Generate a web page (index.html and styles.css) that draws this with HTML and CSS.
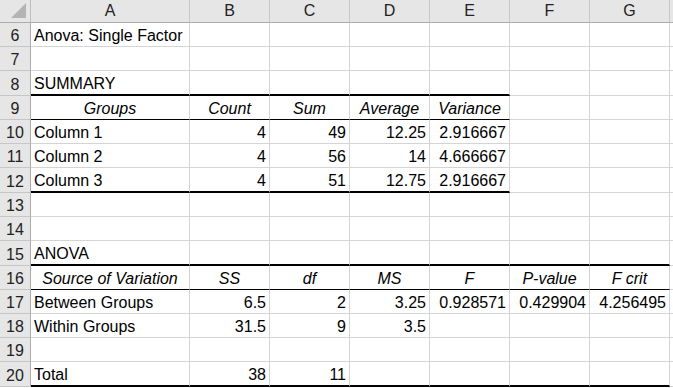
FILE: index.html
```html
<!DOCTYPE html>
<html>
<head>
    <title>Anova: Single Factor</title>
    <link rel="stylesheet" href="styles.css">
</head>
<body>
    <div class="sheet">
        <!-- column headers -->
        <div class="corner"><span class="tri"></span></div>
        <div class="hd">A</div><div class="hd">B</div><div class="hd">C</div><div class="hd">D</div>
        <div class="hd">E</div><div class="hd">F</div><div class="hd">G</div><div class="hd last"></div>

        <!-- 6 -->
        <div class="rh">6</div>
        <div class="c">Anova: Single Factor</div><div class="c"></div><div class="c"></div><div class="c"></div>
        <div class="c"></div><div class="c"></div><div class="c"></div><div class="c"></div>

        <!-- 7 -->
        <div class="rh">7</div>
        <div class="c"></div><div class="c"></div><div class="c"></div><div class="c"></div>
        <div class="c"></div><div class="c"></div><div class="c"></div><div class="c"></div>

        <!-- 8 -->
        <div class="rh">8</div>
        <div class="c thick">SUMMARY</div><div class="c thick"></div><div class="c thick"></div><div class="c thick"></div>
        <div class="c thick"></div><div class="c"></div><div class="c"></div><div class="c"></div>

        <!-- 9 -->
        <div class="rh">9</div>
        <div class="c th rule">Groups</div><div class="c th rule">Count</div><div class="c th rule">Sum</div><div class="c th rule">Average</div>
        <div class="c th rule">Variance</div><div class="c"></div><div class="c"></div><div class="c"></div>

        <!-- 10 -->
        <div class="rh">10</div>
        <div class="c">Column 1</div><div class="c num">4</div><div class="c num">49</div><div class="c num">12.25</div>
        <div class="c num">2.916667</div><div class="c"></div><div class="c"></div><div class="c"></div>

        <!-- 11 -->
        <div class="rh">11</div>
        <div class="c">Column 2</div><div class="c num">4</div><div class="c num">56</div><div class="c num">14</div>
        <div class="c num">4.666667</div><div class="c"></div><div class="c"></div><div class="c"></div>

        <!-- 12 -->
        <div class="rh">12</div>
        <div class="c thick">Column 3</div><div class="c num thick">4</div><div class="c num thick">51</div><div class="c num thick">12.75</div>
        <div class="c num thick">2.916667</div><div class="c"></div><div class="c"></div><div class="c"></div>

        <!-- 13 -->
        <div class="rh">13</div>
        <div class="c"></div><div class="c"></div><div class="c"></div><div class="c"></div>
        <div class="c"></div><div class="c"></div><div class="c"></div><div class="c"></div>

        <!-- 14 -->
        <div class="rh">14</div>
        <div class="c"></div><div class="c"></div><div class="c"></div><div class="c"></div>
        <div class="c"></div><div class="c"></div><div class="c"></div><div class="c"></div>

        <!-- 15 -->
        <div class="rh">15</div>
        <div class="c thick">ANOVA</div><div class="c thick"></div><div class="c thick"></div><div class="c thick"></div>
        <div class="c thick"></div><div class="c thick"></div><div class="c thick"></div><div class="c"></div>

        <!-- 16 -->
        <div class="rh">16</div>
        <div class="c th rule">Source of Variation</div><div class="c th rule">SS</div><div class="c th rule">df</div><div class="c th rule">MS</div>
        <div class="c th rule">F</div><div class="c th rule">P-value</div><div class="c th rule">F crit</div><div class="c"></div>

        <!-- 17 -->
        <div class="rh">17</div>
        <div class="c">Between Groups</div><div class="c num">6.5</div><div class="c num">2</div><div class="c num">3.25</div>
        <div class="c num">0.928571</div><div class="c num">0.429904</div><div class="c num">4.256495</div><div class="c"></div>

        <!-- 18 -->
        <div class="rh">18</div>
        <div class="c">Within Groups</div><div class="c num">31.5</div><div class="c num">9</div><div class="c num">3.5</div>
        <div class="c"></div><div class="c"></div><div class="c"></div><div class="c"></div>

        <!-- 19 -->
        <div class="rh">19</div>
        <div class="c"></div><div class="c"></div><div class="c"></div><div class="c"></div>
        <div class="c"></div><div class="c"></div><div class="c"></div><div class="c"></div>

        <!-- 20 -->
        <div class="rh">20</div>
        <div class="c thick">Total</div><div class="c num thick">38</div><div class="c num thick">11</div><div class="c thick"></div>
        <div class="c thick"></div><div class="c thick"></div><div class="c thick"></div><div class="c"></div>
    </div>
</body>
</html>
```

FILE: styles.css
```css
body {
    margin: 0;
    background: #fff;
    font-family: "Liberation Sans", Arial, sans-serif;
    font-size: 16px;
    color: #000;
}
.sheet {
    display: grid;
    grid-template-columns: 31px 159px repeat(6, 80px) 1fr;
    grid-template-rows: 23px 24px 24px 25px 24px 24px 24px 25px 24px 24px 25px 24px 24px 24px 24px 25px;
    width: 673px;
    overflow: hidden;
}
.sheet > div {
    box-sizing: border-box;
    min-width: 0;
    white-space: nowrap;
}
.c {
    display: flex;
    align-items: flex-end;
    padding: 0 3px;
    line-height: 20px;
    border-right: 1px solid #d4d4d4;
    border-bottom: 1px solid #d4d4d4;
}
.num {
    justify-content: flex-end;
}
.th {
    justify-content: center;
    font-style: italic;
}
.rule {
    border-bottom-color: #000;
}
.thick {
    border-bottom: 2px solid #000;
}
.corner {
    position: relative;
    background: #e6e6e6;
    border-right: 1px solid #bfbfbf;
    border-bottom: 1px solid #ababab;
}
.corner .tri {
    position: absolute;
    right: 4px;
    bottom: 4px;
    width: 0;
    height: 0;
    border-left: 15px solid transparent;
    border-bottom: 15px solid #b4b4b4;
}
.hd {
    display: flex;
    align-items: center;
    justify-content: center;
    background: #e6e6e6;
    color: #222;
    border-right: 1px solid #c6c6c6;
    border-bottom: 1px solid #ababab;
}
.hd.last {
    border-right: none;
}
.rh {
    display: flex;
    align-items: flex-end;
    justify-content: center;
    line-height: 20px;
    background: #e6e6e6;
    color: #222;
    border-right: 1px solid #ababab;
    border-bottom: 1px solid #c6c6c6;
}
```
